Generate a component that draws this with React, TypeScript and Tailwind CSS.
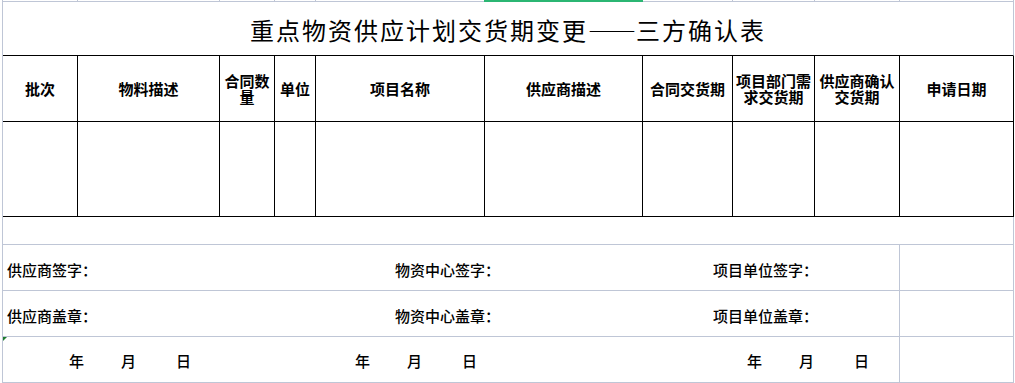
import React from "react";

const COLS = "grid grid-cols-[75px_142px_55px_41px_169px_158px_90px_82px_85px_114px]";

const headers = [
  "批次",
  "物料描述",
  "合同数量",
  "单位",
  "项目名称",
  "供应商描述",
  "合同交货期",
  "项目部门需求交货期",
  "供应商确认交货期",
  "申请日期",
];

function DateGroup() {
  return (
    <div className="flex items-center">
      <span className="w-[15px]">年</span>
      <span className="ml-[37px] w-[15px]">月</span>
      <span className="ml-[40px] w-[15px]">日</span>
    </div>
  );
}

export default function App() {
  return (
    <div className="relative w-[1015px] h-[383px] overflow-hidden bg-white text-black font-['Noto_Sans_CJK_SC',sans-serif]">
      <div className="ml-[2px] w-[1012px] border-l border-[#bfc6d6]">
        {/* top strip (previous row) */}
        <div className={COLS}>
          {headers.map((_, i) => (
            <div key={i} className="h-[2px] border-b border-r border-[#bfc6d6]" />
          ))}
        </div>

        {/* title */}
        <div className="h-[54px] w-[1011px] border-b border-b-black border-r border-r-[#bfc6d6] flex items-center justify-center pt-[2px]">
          <span className="text-[24px] leading-[24px] tracking-[2px] font-normal">
            重点物资供应计划交货期变更
            <span className="[font-feature-settings:'fwid'] tracking-[0px]">——</span>
            三方确认表
          </span>
        </div>

        {/* header row */}
        <div className={COLS}>
          {headers.map((h, i) => (
            <div
              key={i}
              className="h-[66px] border-b border-r border-black flex items-center justify-center text-center px-[2px] text-[15px] leading-[16px] font-bold"
            >
              {h}
            </div>
          ))}
        </div>

        {/* data row */}
        <div className={COLS}>
          {headers.map((_, i) => (
            <div key={i} className="h-[95px] border-b border-r border-black" />
          ))}
        </div>

        {/* empty row */}
        <div className="h-[28px] w-[1011px] border-b border-r border-[#bfc6d6]" />

        {/* signature rows */}
        <div className="flex h-[46px] text-[15px] leading-[15px] font-medium">
          <div className="w-[897px] border-b border-r border-[#bfc6d6] flex items-center pt-[3px]">
            <div className="w-[392px] pl-[4px]">供应商签字：</div>
            <div className="w-[318px]">物资中心签字：</div>
            <div className="flex-1">项目单位签字：</div>
          </div>
          <div className="w-[114px] border-b border-r border-[#bfc6d6]" />
        </div>

        <div className="flex h-[46px] text-[15px] leading-[15px] font-medium">
          <div className="w-[897px] border-b border-r border-[#bfc6d6] flex items-center pt-[3px]">
            <div className="w-[392px] pl-[4px]">供应商盖章：</div>
            <div className="w-[318px]">物资中心盖章：</div>
            <div className="flex-1">项目单位盖章：</div>
          </div>
          <div className="w-[114px] border-b border-r border-[#bfc6d6]" />
        </div>

        <div className="flex h-[46px] text-[15px] leading-[15px] font-medium">
          <div className="relative w-[897px] border-b border-r border-[#bfc6d6] flex items-center pt-[2px]">
            <svg className="absolute left-0 top-0" width="4" height="4" viewBox="0 0 4 4">
              <polygon points="0,0 4,0 0,4" fill="#1e7b2e" />
            </svg>
            <div className="w-[352px] pl-[66px]">
              <DateGroup />
            </div>
            <div className="w-[392px]">
              <DateGroup />
            </div>
            <div className="flex-1">
              <DateGroup />
            </div>
          </div>
          <div className="w-[114px] border-b border-r border-[#bfc6d6]" />
        </div>
      </div>

      {/* selected column indicator */}
      <div className="absolute left-[484px] top-0 w-[159px] h-[2px] bg-[#2bb673]" />
    </div>
  );
}
